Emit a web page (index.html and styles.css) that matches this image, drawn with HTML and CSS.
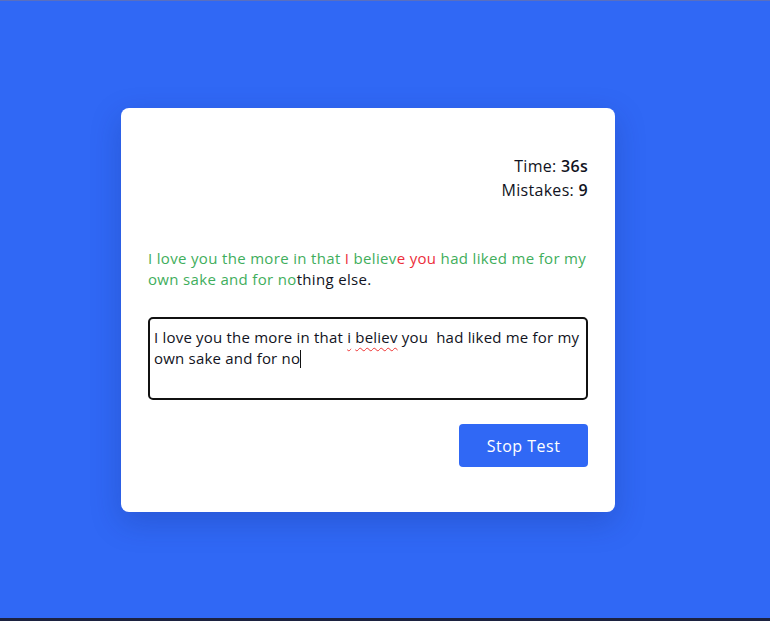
FILE: index.html
```html
<!DOCTYPE html>
<html>
<head>
<meta charset="utf-8">
<link rel="stylesheet" href="styles.css">
</head>
<body>
<main class="page">
  <section class="card">
    <div class="stats">
      <div>Time: <b>36s</b></div>
      <div>Mistakes: <b>9</b></div>
    </div>
    <p class="quote"><span class="ok">I love you the more in that </span><span class="bad">I</span><span class="ok"> believ</span><span class="bad">e you</span><span class="ok"> had liked me for my own sake and for no</span><span class="rest">thing else.</span></p>
    <div class="input">I love you the more in that <span class="spell">i</span> <span class="spell">believ</span> you&nbsp; had liked me for my own sake and for no<span class="caret"></span></div>
    <div class="actions">
      <button class="btn">Stop Test</button>
    </div>
  </section>
</main>
</body>
</html>
```
FILE: styles.css
```css
html, body {
  margin: 0;
  padding: 0;
  height: 100%;
}
body {
  background: #3068f5;
  font-family: "Open Sans", "Noto Sans", sans-serif;
  color: #111322;
  border-top: 1px solid #5a6fbf;
  border-bottom: 3px solid #1c2240;
  box-sizing: border-box;
}
.page {
  display: flex;
  justify-content: center;
  padding-top: 107px;
  padding-right: 34px;
}
.card {
  width: 440px;
  background: #fff;
  border-radius: 8px;
  padding: 46px 27px 45px;
  box-shadow: 0 10px 30px rgba(20, 40, 120, 0.25);
}
.stats {
  text-align: right;
  font-size: 16px;
  line-height: 24px;
  letter-spacing: 0.3px;
}
.stats b {
  font-weight: 600;
}
.quote {
  margin: 46px 0 0;
  font-size: 15px;
  line-height: 21px;
  letter-spacing: 0.33px;
}
.ok { color: #3fae5c; }
.bad { color: #ec2d3a; }
.rest { color: #111322; }
.input {
  margin-top: 27px;
  height: 65px;
  border: 2px solid #111;
  border-radius: 5px;
  padding: 8px 2px 6px 4px;
  font-size: 15px;
  line-height: 21px;
  letter-spacing: 0.2px;
}
.spell {
  text-decoration: underline wavy #e33;
  text-decoration-thickness: 1px;
  text-underline-offset: 4px;
}
.caret {
  display: inline-block;
  width: 1px;
  height: 18px;
  background: #111;
  vertical-align: -4px;
}
.actions {
  display: flex;
  justify-content: flex-end;
  margin-top: 24px;
}
.btn {
  width: 129px;
  height: 43px;
  background: #3068f5;
  color: #fff;
  border: none;
  border-radius: 4px;
  font-family: inherit;
  font-size: 16px;
  letter-spacing: 0.5px;
}
```
